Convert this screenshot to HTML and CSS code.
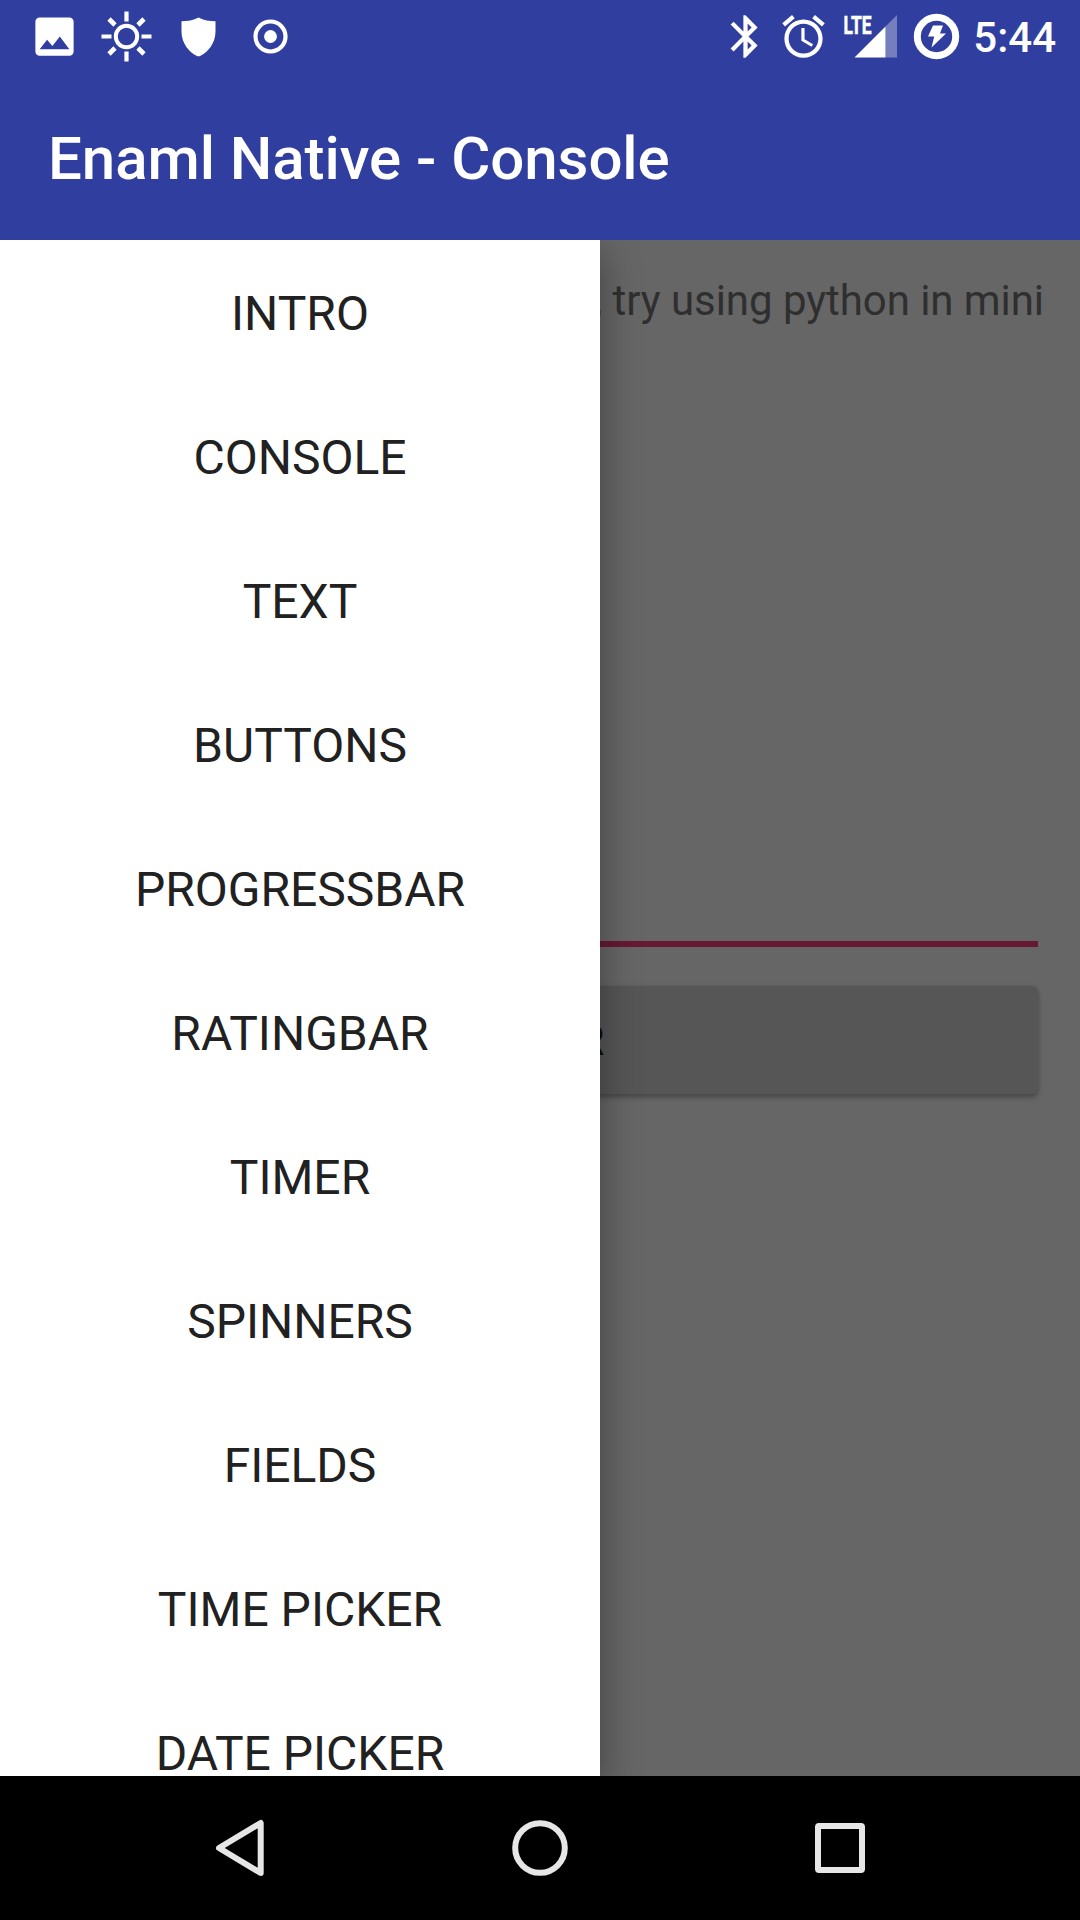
FILE: index.html
```html
<!DOCTYPE html>
<html lang="en">
<head>
<meta charset="utf-8">
<title>Enaml Native - Console</title>
<link rel="stylesheet" href="styles.css">
</head>
<body>
<div class="screen">
  <header class="top">
    <div class="status">
      <div class="notifications">
        <svg class="icon" viewBox="0 0 24 24"><path d="M21 19V5c0-1.100-.9-2-2-2H5c-1.100 0-2 .9-2 2v14c0 1.100.9 2 2 2h14c1.100 0 2-.9 2-2zM8.500 13.500l2.500 3.010L14.500 12l4.500 6H5l3.500-4.500z"/></svg>
        <svg class="icon" viewBox="-25.500 -25.500 51 51">
          <g class="line">
            <circle r="10.700" stroke-width="4"/>
            <path stroke-width="4.200" d="M0-25V-15M0 15V25M-25 0H-15M15 0H25"/>
            <path stroke-width="4.600" d="M-17.500-17.500l6 6M17.500-17.500l-6 6M-17.500 17.500l6-6M17.500 17.500l-6-6"/>
          </g>
        </svg>
        <svg class="icon" viewBox="-25.500 -25.500 51 51"><path d="M0-19C-5-16-11-15.300-17-15.300V-5C-17 7-9 16-2 19.200Q0 20.200 2 19.200C9 16 17 7 17-5V-15.300C11-15.300 5-16 0-19z"/></svg>
        <svg class="icon" viewBox="-25.500 -25.500 51 51"><circle class="line" r="15" stroke-width="4.200"/><circle r="6.400"/></svg>
      </div>
      <div class="system">
        <svg class="icon bluetooth" viewBox="0 0 24 24"><path d="M17.710 7.710L12 2h-1v7.590L6.410 5 5 6.410 10.590 12 5 17.590 6.410 19 11 14.410V22h1l5.710-5.710-4.300-4.290 4.300-4.290zM13 5.830l1.880 1.880L13 9.590V5.830zm1.880 10.460L13 18.170v-3.760l1.880 1.880z"/></svg>
        <svg class="icon alarm" viewBox="0 0 24 24"><path d="M22 5.720l-4.600-3.860-1.290 1.530 4.600 3.860L22 5.720zM7.880 3.390L6.600 1.860 2 5.710l1.290 1.530 4.590-3.850zM12.500 8H11v6l4.750 2.850.75-1.230-4-2.370V8zM12 4c-4.970 0-9 4.030-9 9s4.020 9 9 9c4.970 0 9-4.030 9-9s-4.030-9-9-9zm0 16c-3.870 0-7-3.130-7-7s3.130-7 7-7 7 3.130 7 7-3.130 7-7 7z"/></svg>
        <svg class="signal" viewBox="0 0 56 51">
          <path class="weak" d="M42.500 15.500L54 4v42.500H42.500z"/>
          <path d="M11.500 46.500l31-31v31z"/>
          <text class="lte" x="0.500" y="23" textLength="28" lengthAdjust="spacingAndGlyphs">LTE</text>
        </svg>
        <svg class="icon" viewBox="-25.500 -25.500 51 51"><circle class="line" r="19.200" stroke-width="7"/><path d="M-3.500-11H6.500L3.500-3H9.500L-5 11L-2.300 0H-8.500z"/></svg>
        <span class="clock">5:44</span>
      </div>
    </div>
    <h1 class="title">Enaml Native - Console</h1>
  </header>

  <main class="content">
    <section class="page">
      <div class="console">, try using python in mini</div>
      <div class="underline"></div>
      <button class="enter">ENTER</button>
    </section>
    <nav class="drawer">
      <a>INTRO</a>
      <a>CONSOLE</a>
      <a>TEXT</a>
      <a>BUTTONS</a>
      <a>PROGRESSBAR</a>
      <a>RATINGBAR</a>
      <a>TIMER</a>
      <a>SPINNERS</a>
      <a>FIELDS</a>
      <a>TIME PICKER</a>
      <a>DATE PICKER</a>
    </nav>
  </main>

  <footer class="navbar">
    <svg viewBox="-30 -30 60 60"><path d="M-21 0L20.700-25V25z"/></svg>
    <svg viewBox="-30 -30 60 60"><circle r="24.800"/></svg>
    <svg viewBox="-30 -30 60 60"><rect x="-22" y="-22" width="44" height="44" rx="1"/></svg>
  </footer>
</div>
</body>
</html>
```
FILE: styles.css
```css
* {
  box-sizing: border-box;
}

body {
  margin: 0;
  font-family: Roboto, "Liberation Sans", sans-serif;
}

.screen {
  display: flex;
  flex-direction: column;
  width: 1080px;
  height: 1920px;
  overflow: hidden;
}

/* Status bar and app bar */
.top {
  height: 240px;
  background: #303f9f;
  color: #fff;
}

.status {
  display: flex;
  justify-content: space-between;
  height: 72px;
  padding: 0 24px 0 28.5px;
}

.notifications,
.system {
  display: flex;
  align-items: center;
}

.notifications {
  gap: 21px;
}

.icon {
  width: 51px;
  height: 51px;
  fill: #fff;
}

.bluetooth {
  margin-right: 7px;
}

.alarm {
  margin-right: 14px;
}

.line {
  fill: none;
  stroke: #fff;
}

.signal {
  width: 56px;
  height: 51px;
  margin-right: 12px;
  overflow: visible;
  fill: #fff;
}

.weak {
  fill: #757fbd;
}

.lte {
  font-size: 26.5px;
  font-weight: 700;
  stroke: #fff;
  stroke-width: 0.6px;
}

.clock {
  margin: 3px 0 0 11px;
  font-size: 42px;
  line-height: 50px;
  font-weight: 500;
}

.title {
  margin: 0;
  padding: 2px 0 0 48px;
  font-size: 60px;
  line-height: 170px;
  font-weight: 500;
  letter-spacing: -0.06px;
}

/* Page under the scrim, with the drawer above it */
.content {
  display: grid;
  grid-template-columns: 600px 480px;
  height: 1536px;
  overflow: hidden;
  background: #666;
}

.page {
  grid-area: 1 / 1 / 2 / 3;
  padding: 36px 36px 0;
}

.console {
  height: 665px;
  color: #2f2f2f;
  font-size: 42px;
  line-height: 50px;
  letter-spacing: -0.06px;
  text-align: right;
  white-space: nowrap;
}

.underline {
  height: 6px;
  margin: 0 6px 39px;
  background: #661933;
}

.enter {
  display: block;
  width: 996px;
  height: 108px;
  margin: 0 6px;
  padding: 0;
  border: 0;
  border-radius: 6px;
  background: #565656;
  box-shadow: 0 4px 5px rgba(0, 0, 0, 0.24), 0 0 4px rgba(0, 0, 0, 0.12);
  color: #0d0d0d;
  font: 500 42px Roboto, "Liberation Sans", sans-serif;
}

.drawer {
  z-index: 1;
  grid-area: 1 / 1 / 2 / 2;
  display: flex;
  flex-direction: column;
  height: 1536px;
  background: #fff;
  box-shadow: 0 12px 36px rgba(0, 0, 0, 0.38);
}

.drawer a {
  flex: none;
  height: 144px;
  padding-top: 2px;
  color: #212121;
  font-size: 48px;
  line-height: 144px;
  text-align: center;
}

/* System navigation */
.navbar {
  z-index: 2;
  display: flex;
  align-items: center;
  justify-content: center;
  gap: 240px;
  height: 144px;
  background: #000;
}

.navbar svg {
  width: 60px;
  height: 60px;
  fill: none;
  stroke: #e6e6e6;
  stroke-width: 6;
  stroke-linejoin: round;
}
```
